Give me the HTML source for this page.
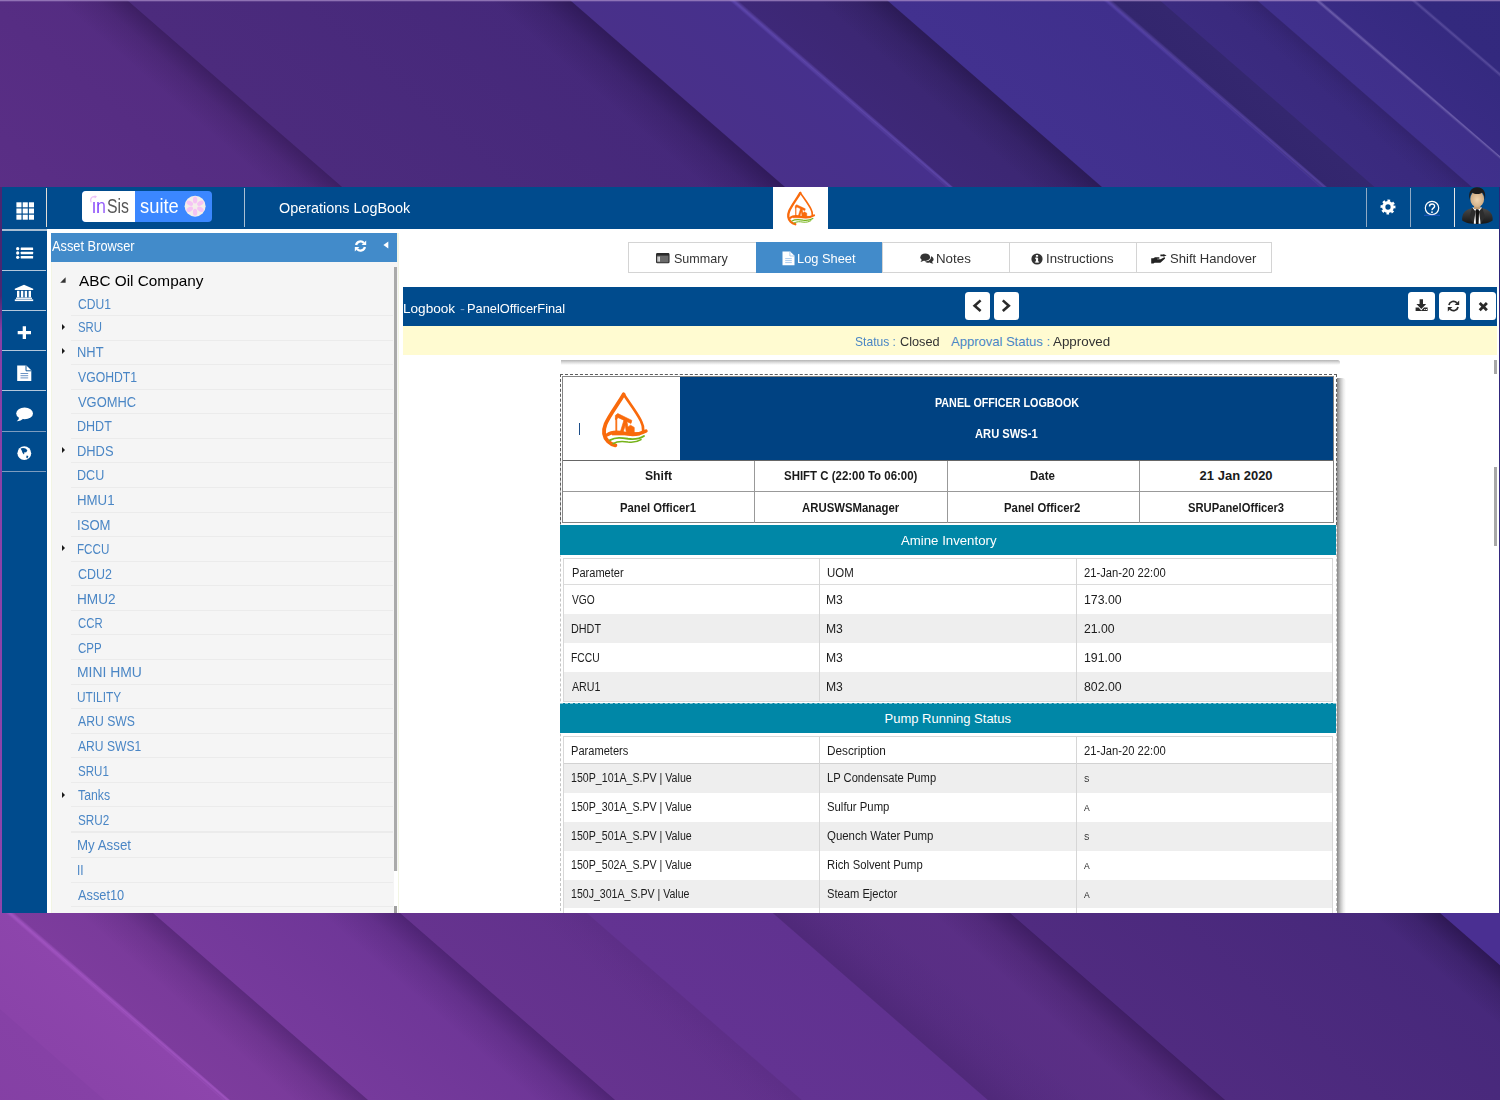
<!DOCTYPE html>
<html lang="en"><head><meta charset="utf-8"><title>Operations LogBook</title>
<style>
html,body{margin:0;padding:0;}
body{width:1500px;height:1100px;overflow:hidden;position:relative;background:#4b2a7c;font-family:"Liberation Sans",sans-serif;}
#bg{position:absolute;left:0;top:0;width:1500px;height:1100px;}
#app{position:absolute;left:0;top:0;width:1500px;height:912.6px;overflow:hidden;}
#app div,#app svg,#app span{position:absolute;}
#texts{position:absolute;left:0;top:0;width:1500px;height:912.6px;overflow:hidden;}
#texts .t{position:absolute;white-space:pre;transform-origin:0 50%;display:block;}
.hb{background:#004b8d;}
.sep{height:1px;left:2px;width:44px;background:#b4c8dc;}
.vd{width:1px;top:188px;height:39px;}
.btn{background:#fff;border-radius:3.5px;top:292px;height:28px;}
.trow{left:71px;width:322px;height:1px;background:#ebebeb;}
.tri{width:0;height:0;border-left:3.7px solid #1a1a1a;border-top:3.8px solid transparent;border-bottom:3.8px solid transparent;left:61.9px;}
.tab{top:242px;height:29px;border:1px solid #d4d4d4;background:#fff;box-sizing:content-box;}
.teal{background:#0086a6;left:560px;width:775px;height:30px;}
.g{background:#eee;left:564px;width:768px;}
svg{display:block;overflow:visible;}

</style></head>
<body>
<svg id="bg" viewBox="0 0 1500 1100" preserveAspectRatio="none">
<defs>
<linearGradient id="gt" x1="0" y1="0" x2="1" y2="0"><stop offset="0" stop-color="#5a2d84"/><stop offset="0.45" stop-color="#46297b"/><stop offset="1" stop-color="#34277c"/></linearGradient>
<linearGradient id="gb" x1="0" y1="0" x2="1" y2="0"><stop offset="0" stop-color="#8a40a8"/><stop offset="0.5" stop-color="#5d3088"/><stop offset="1" stop-color="#44287a"/></linearGradient>
</defs>
<rect x="0" y="0" width="1500" height="560" fill="url(#gt)"/>
<rect x="0" y="560" width="1500" height="540" fill="url(#gb)"/>
<defs><linearGradient id="g1" gradientUnits="userSpaceOnUse" x1="-300.0" y1="0.0" x2="-116.1" y2="-211.4"><stop offset="0" stop-color="#5c2f87"/><stop offset="1" stop-color="#532c81"/></linearGradient><linearGradient id="g2" gradientUnits="userSpaceOnUse" x1="127.0" y1="0.0" x2="317.7" y2="-219.4"><stop offset="0" stop-color="#4c2b7d"/><stop offset="1" stop-color="#44287a"/></linearGradient><linearGradient id="g3" gradientUnits="userSpaceOnUse" x1="570.0" y1="0.0" x2="640.2" y2="-80.7"><stop offset="0" stop-color="#49308a"/><stop offset="1" stop-color="#46308c"/></linearGradient><linearGradient id="g4" gradientUnits="userSpaceOnUse" x1="733.0" y1="0.0" x2="799.3" y2="-76.3"><stop offset="0" stop-color="#3e2878"/><stop offset="1" stop-color="#3a2670"/></linearGradient><linearGradient id="g5" gradientUnits="userSpaceOnUse" x1="887.0" y1="0.0" x2="981.7" y2="-108.9"><stop offset="0" stop-color="#42318f"/><stop offset="1" stop-color="#3f2f8c"/></linearGradient><linearGradient id="g6" gradientUnits="userSpaceOnUse" x1="1107.0" y1="0.0" x2="1129.8" y2="-26.2"><stop offset="0" stop-color="#33266e"/><stop offset="1" stop-color="#34276f"/></linearGradient><linearGradient id="g7" gradientUnits="userSpaceOnUse" x1="1160.0" y1="0.0" x2="1201.8" y2="-48.0"><stop offset="0" stop-color="#3b2b80"/><stop offset="1" stop-color="#39297c"/></linearGradient><linearGradient id="g8" gradientUnits="userSpaceOnUse" x1="1257.0" y1="0.0" x2="1282.8" y2="-29.7"><stop offset="0" stop-color="#40308c"/><stop offset="1" stop-color="#3f2f8a"/></linearGradient><linearGradient id="g9" gradientUnits="userSpaceOnUse" x1="1317.0" y1="0.0" x2="1358.3" y2="-47.5"><stop offset="0" stop-color="#392b84"/><stop offset="1" stop-color="#352a80"/></linearGradient><linearGradient id="g10" gradientUnits="userSpaceOnUse" x1="1413.0" y1="0.0" x2="1536.6" y2="-142.1"><stop offset="0" stop-color="#33297e"/><stop offset="1" stop-color="#32287c"/></linearGradient><linearGradient id="g11" gradientUnits="userSpaceOnUse" x1="57.0" y1="0.0" x2="87.1" y2="-34.7"><stop offset="0" stop-color="#1e0d3a" stop-opacity="0"/><stop offset="0.55" stop-color="#1e0d3a" stop-opacity="0.147"/><stop offset="1" stop-color="#1e0d3a" stop-opacity="0.42"/></linearGradient><linearGradient id="g12" gradientUnits="userSpaceOnUse" x1="490.0" y1="0.0" x2="524.4" y2="-39.6"><stop offset="0" stop-color="#180a34" stop-opacity="0"/><stop offset="0.55" stop-color="#180a34" stop-opacity="0.1575"/><stop offset="1" stop-color="#180a34" stop-opacity="0.45"/></linearGradient><linearGradient id="g13" gradientUnits="userSpaceOnUse" x1="817.0" y1="0.0" x2="847.1" y2="-34.7"><stop offset="0" stop-color="#150a30" stop-opacity="0"/><stop offset="0.55" stop-color="#150a30" stop-opacity="0.13999999999999999"/><stop offset="1" stop-color="#150a30" stop-opacity="0.4"/></linearGradient><linearGradient id="g14" gradientUnits="userSpaceOnUse" x1="1217.0" y1="0.0" x2="1234.2" y2="-19.8"><stop offset="0" stop-color="#150a30" stop-opacity="0"/><stop offset="0.55" stop-color="#150a30" stop-opacity="0.063"/><stop offset="1" stop-color="#150a30" stop-opacity="0.18"/></linearGradient><linearGradient id="g15" gradientUnits="userSpaceOnUse" x1="728.0" y1="0.0" x2="732.3" y2="-5.0"><stop offset="0" stop-color="#7a62d8" stop-opacity="0"/><stop offset="0.5" stop-color="#7a62d8" stop-opacity="0.5"/><stop offset="1" stop-color="#7a62d8" stop-opacity="0"/></linearGradient><linearGradient id="g16" gradientUnits="userSpaceOnUse" x1="1102.0" y1="0.0" x2="1106.3" y2="-5.0"><stop offset="0" stop-color="#7a62d8" stop-opacity="0"/><stop offset="0.5" stop-color="#7a62d8" stop-opacity="0.45"/><stop offset="1" stop-color="#7a62d8" stop-opacity="0"/></linearGradient><linearGradient id="g17" gradientUnits="userSpaceOnUse" x1="1313.5" y1="0.0" x2="1316.5" y2="-3.5"><stop offset="0" stop-color="#b0a0e0" stop-opacity="0"/><stop offset="0.5" stop-color="#b0a0e0" stop-opacity="0.42"/><stop offset="1" stop-color="#b0a0e0" stop-opacity="0"/></linearGradient><linearGradient id="g18" gradientUnits="userSpaceOnUse" x1="1409.5" y1="0.0" x2="1412.5" y2="-3.5"><stop offset="0" stop-color="#a090d8" stop-opacity="0"/><stop offset="0.5" stop-color="#a090d8" stop-opacity="0.32"/><stop offset="1" stop-color="#a090d8" stop-opacity="0"/></linearGradient><linearGradient id="g19" gradientUnits="userSpaceOnUse" x1="-409.2" y1="905.0" x2="-284.3" y2="761.4"><stop offset="0" stop-color="#823ea2"/><stop offset="1" stop-color="#8641a6"/></linearGradient><linearGradient id="g20" gradientUnits="userSpaceOnUse" x1="-119.2" y1="905.0" x2="-67.5" y2="845.6"><stop offset="0" stop-color="#8a43a9"/><stop offset="1" stop-color="#8d45ac"/></linearGradient><linearGradient id="g21" gradientUnits="userSpaceOnUse" x1="0.8" y1="905.0" x2="62.4" y2="834.2"><stop offset="0" stop-color="#7d3c9d"/><stop offset="1" stop-color="#773999"/></linearGradient><linearGradient id="g22" gradientUnits="userSpaceOnUse" x1="143.8" y1="905.0" x2="250.2" y2="782.7"><stop offset="0" stop-color="#763a9c"/><stop offset="1" stop-color="#6c3596"/></linearGradient><linearGradient id="g23" gradientUnits="userSpaceOnUse" x1="390.8" y1="905.0" x2="471.3" y2="812.4"><stop offset="0" stop-color="#66338f"/><stop offset="1" stop-color="#61318c"/></linearGradient><linearGradient id="g24" gradientUnits="userSpaceOnUse" x1="577.8" y1="905.0" x2="657.9" y2="812.9"><stop offset="0" stop-color="#633392"/><stop offset="1" stop-color="#603290"/></linearGradient><linearGradient id="g25" gradientUnits="userSpaceOnUse" x1="763.8" y1="905.0" x2="865.8" y2="787.6"><stop offset="0" stop-color="#582e84"/><stop offset="1" stop-color="#5b2f86"/></linearGradient><linearGradient id="g26" gradientUnits="userSpaceOnUse" x1="1000.8" y1="905.0" x2="1185.9" y2="692.1"><stop offset="0" stop-color="#502b80"/><stop offset="1" stop-color="#45287a"/></linearGradient><linearGradient id="g27" gradientUnits="userSpaceOnUse" x1="-4.2" y1="905.0" x2="0.1" y2="900.0"><stop offset="0" stop-color="#b562d6" stop-opacity="0"/><stop offset="0.5" stop-color="#b562d6" stop-opacity="0.6"/><stop offset="1" stop-color="#b562d6" stop-opacity="0"/></linearGradient><linearGradient id="g28" gradientUnits="userSpaceOnUse" x1="68.8" y1="905.0" x2="101.1" y2="867.9"><stop offset="0" stop-color="#2a0f4a" stop-opacity="0"/><stop offset="0.55" stop-color="#2a0f4a" stop-opacity="0.1295"/><stop offset="1" stop-color="#2a0f4a" stop-opacity="0.37"/></linearGradient><linearGradient id="g29" gradientUnits="userSpaceOnUse" x1="310.8" y1="905.0" x2="345.2" y2="865.4"><stop offset="0" stop-color="#260d46" stop-opacity="0"/><stop offset="0.55" stop-color="#260d46" stop-opacity="0.147"/><stop offset="1" stop-color="#260d46" stop-opacity="0.42"/></linearGradient><linearGradient id="g30" gradientUnits="userSpaceOnUse" x1="517.8" y1="905.0" x2="543.6" y2="875.3"><stop offset="0" stop-color="#260d46" stop-opacity="0"/><stop offset="0.55" stop-color="#260d46" stop-opacity="0.0245"/><stop offset="1" stop-color="#260d46" stop-opacity="0.07"/></linearGradient><linearGradient id="g31" gradientUnits="userSpaceOnUse" x1="763.8" y1="905.0" x2="806.9" y2="855.5"><stop offset="0" stop-color="#220c42" stop-opacity="0.16"/><stop offset="0.45" stop-color="#220c42" stop-opacity="0.055999999999999994"/><stop offset="1" stop-color="#220c42" stop-opacity="0"/></linearGradient><linearGradient id="g32" gradientUnits="userSpaceOnUse" x1="920.8" y1="905.0" x2="955.2" y2="865.4"><stop offset="0" stop-color="#1e0a3c" stop-opacity="0"/><stop offset="0.55" stop-color="#1e0a3c" stop-opacity="0.1575"/><stop offset="1" stop-color="#1e0a3c" stop-opacity="0.45"/></linearGradient><linearGradient id="g33" gradientUnits="userSpaceOnUse" x1="1360.8" y1="905.0" x2="1390.9" y2="870.3"><stop offset="0" stop-color="#170830" stop-opacity="0"/><stop offset="0.55" stop-color="#170830" stop-opacity="0.175"/><stop offset="1" stop-color="#170830" stop-opacity="0.5"/></linearGradient></defs>
<polygon points="-300.5,0.0 127.5,0.0 346.0,190.0 -82.0,190.0" fill="url(#g1)"/>
<polygon points="126.5,0.0 570.5,0.0 789.0,190.0 345.0,190.0" fill="url(#g2)"/>
<polygon points="569.5,0.0 733.5,0.0 952.0,190.0 788.0,190.0" fill="url(#g3)"/>
<polygon points="732.5,0.0 887.5,0.0 1106.0,190.0 951.0,190.0" fill="url(#g4)"/>
<polygon points="886.5,0.0 1107.5,0.0 1326.0,190.0 1105.0,190.0" fill="url(#g5)"/>
<polygon points="1106.5,0.0 1160.5,0.0 1379.0,190.0 1325.0,190.0" fill="url(#g6)"/>
<polygon points="1159.5,0.0 1257.5,0.0 1476.0,190.0 1378.0,190.0" fill="url(#g7)"/>
<polygon points="1256.5,0.0 1317.5,0.0 1536.0,190.0 1475.0,190.0" fill="url(#g8)"/>
<polygon points="1316.5,0.0 1413.5,0.0 1632.0,190.0 1535.0,190.0" fill="url(#g9)"/>
<polygon points="1412.5,0.0 1700.5,0.0 1919.0,190.0 1631.0,190.0" fill="url(#g10)"/>
<polygon points="57.0,0.0 127.0,0.0 345.5,190.0 275.5,190.0" fill="url(#g11)"/>
<polygon points="490.0,0.0 570.0,0.0 788.5,190.0 708.5,190.0" fill="url(#g12)"/>
<polygon points="817.0,0.0 887.0,0.0 1105.5,190.0 1035.5,190.0" fill="url(#g13)"/>
<polygon points="1217.0,0.0 1257.0,0.0 1475.5,190.0 1435.5,190.0" fill="url(#g14)"/>
<polygon points="728.0,0.0 738.0,0.0 956.5,190.0 946.5,190.0" fill="url(#g15)"/>
<polygon points="1102.0,0.0 1112.0,0.0 1330.5,190.0 1320.5,190.0" fill="url(#g16)"/>
<polygon points="1313.5,0.0 1320.5,0.0 1539.0,190.0 1532.0,190.0" fill="url(#g17)"/>
<polygon points="1409.5,0.0 1416.5,0.0 1635.0,190.0 1628.0,190.0" fill="url(#g18)"/>
<rect x="0" y="0" width="1500" height="1.3" fill="#a58ac6" opacity="0.75"/>
<polygon points="-409.7,905.0 -118.7,905.0 105.5,1100.0 -185.5,1100.0" fill="url(#g19)"/>
<polygon points="-119.7,905.0 1.3,905.0 225.5,1100.0 104.5,1100.0" fill="url(#g20)"/>
<polygon points="0.3,905.0 144.3,905.0 368.5,1100.0 224.5,1100.0" fill="url(#g21)"/>
<polygon points="143.3,905.0 391.3,905.0 615.5,1100.0 367.5,1100.0" fill="url(#g22)"/>
<polygon points="390.3,905.0 578.3,905.0 802.5,1100.0 614.5,1100.0" fill="url(#g23)"/>
<polygon points="577.3,905.0 764.3,905.0 988.5,1100.0 801.5,1100.0" fill="url(#g24)"/>
<polygon points="763.3,905.0 1001.3,905.0 1225.5,1100.0 987.5,1100.0" fill="url(#g25)"/>
<polygon points="1000.3,905.0 1431.3,905.0 1655.5,1100.0 1224.5,1100.0" fill="url(#g26)"/>
<polygon points="1430.8,905.0 1790.8,905.0 2015.0,1100.0 1655.0,1100.0" fill="#4a2f92"/>
<polygon points="-4.2,905.0 5.8,905.0 230.0,1100.0 220.0,1100.0" fill="url(#g27)"/>
<polygon points="68.8,905.0 143.8,905.0 368.0,1100.0 293.0,1100.0" fill="url(#g28)"/>
<polygon points="310.8,905.0 390.8,905.0 615.0,1100.0 535.0,1100.0" fill="url(#g29)"/>
<polygon points="517.8,905.0 577.8,905.0 802.0,1100.0 742.0,1100.0" fill="url(#g30)"/>
<polygon points="763.8,905.0 863.8,905.0 1088.0,1100.0 988.0,1100.0" fill="url(#g31)"/>
<polygon points="920.8,905.0 1000.8,905.0 1225.0,1100.0 1145.0,1100.0" fill="url(#g32)"/>
<polygon points="1360.8,905.0 1430.8,905.0 1655.0,1100.0 1585.0,1100.0" fill="url(#g33)"/>
<linearGradient id="gl" x1="0" y1="0" x2="0" y2="1"><stop offset="0" stop-color="#4a2672"/><stop offset="0.15" stop-color="#4a2672"/><stop offset="0.2" stop-color="#8a3fa6"/><stop offset="1" stop-color="#8e44ac"/></linearGradient>
<rect x="0" y="187" width="2" height="726" fill="url(#gl)"/>
<linearGradient id="gr" x1="0" y1="0" x2="0" y2="1"><stop offset="0" stop-color="#2c2478"/><stop offset="1" stop-color="#3a2a86"/></linearGradient>
<rect x="1499" y="187" width="1" height="726" fill="url(#gr)"/>
</svg>
<div id="app">
  <div style="left:2px;top:187px;width:1497px;height:725.6px;background:#fff;"></div>
  <!-- header -->
  <div class="hb" style="left:2px;top:187px;width:1497px;height:42px;"></div>
  <div class="hb" style="left:2px;top:229px;width:45px;height:684px;"></div>
  <div style="left:2px;top:229px;width:45px;height:1.5px;background:#a9bfd4;"></div>
  <div class="sep" style="top:270px;"></div>
  <div class="sep" style="top:310px;"></div>
  <div class="sep" style="top:350px;"></div>
  <div class="sep" style="top:390px;"></div>
  <div class="sep" style="top:431px;background:#7d9cbf;"></div>
  <div class="sep" style="top:470.5px;background:#7d9cbf;"></div>
  <div class="vd" style="left:46px;background:#e2ddd6;"></div>
  <div class="vd" style="left:244px;background:#a9bfd4;"></div>
  <div class="vd" style="left:1365.5px;background:#8fa9c4;"></div>
  <div class="vd" style="left:1409.5px;background:#8fa9c4;"></div>
  <div class="vd" style="left:1453.5px;background:#e6e6e6;"></div>
  <!-- asset browser -->
  <div style="left:51px;top:232.5px;width:348px;height:681px;background:#f2f5e4;"></div>
  <div style="left:52px;top:262px;width:346.2px;height:651px;background:#f5f5f5;"></div>
  <div style="left:51px;top:232.6px;width:346px;height:29.2px;background:#428bca;"></div>
  <div style="left:394px;top:871px;width:4.2px;height:42px;background:#fff;"></div>
  <div style="left:394.1px;top:267px;width:2.9px;height:604px;background:#aaa;"></div>
  <div style="left:394.1px;top:906px;width:2.9px;height:8px;background:#a0a0a0;"></div>
  <div class="trow" style="top:314.9px;"></div>
<div class="trow" style="top:339.5px;"></div>
<div class="trow" style="top:364.0px;"></div>
<div class="trow" style="top:388.6px;"></div>
<div class="trow" style="top:413.2px;"></div>
<div class="trow" style="top:437.8px;"></div>
<div class="trow" style="top:462.3px;"></div>
<div class="trow" style="top:486.9px;"></div>
<div class="trow" style="top:511.5px;"></div>
<div class="trow" style="top:536.0px;"></div>
<div class="trow" style="top:560.6px;"></div>
<div class="trow" style="top:585.2px;"></div>
<div class="trow" style="top:609.7px;"></div>
<div class="trow" style="top:634.3px;"></div>
<div class="trow" style="top:658.9px;"></div>
<div class="trow" style="top:683.5px;"></div>
<div class="trow" style="top:708.0px;"></div>
<div class="trow" style="top:732.6px;"></div>
<div class="trow" style="top:757.2px;"></div>
<div class="trow" style="top:781.7px;"></div>
<div class="trow" style="top:806.3px;"></div>
<div class="trow" style="top:830.9px;height:2px;"></div>
<div class="trow" style="top:857.0px;"></div>
<div class="trow" style="top:881.7px;"></div>
<div class="trow" style="top:906.1px;"></div>
<div class="tri" style="top:323.5px;"></div>
<div class="tri" style="top:348.4px;"></div>
<div class="tri" style="top:446.7px;"></div>
<div class="tri" style="top:545.2px;"></div>
<div class="tri" style="top:791.5px;"></div>
<svg style="left:60px;top:276.5px;" width="6" height="6" viewBox="0 0 6 6"><path d="M5.6 0.3 L5.6 5.8 L0.2 5.8 Z" fill="#333"/></svg>
  <!-- tabs -->
  <div class="tab" style="left:628px;width:127px;"></div>
  <div class="tab" style="left:756px;width:125px;background:#428bca;border-color:#428bca;"></div>
  <div class="tab" style="left:882px;width:126.5px;"></div>
  <div class="tab" style="left:1009px;width:126.5px;"></div>
  <div class="tab" style="left:1136px;width:133.5px;"></div>
  <!-- logbook bar -->
  <div class="hb" style="left:402.5px;top:287px;width:1094.5px;height:39.3px;"></div>
  <div style="left:402.5px;top:326.3px;width:1094.5px;height:28.9px;background:#fffbd1;"></div>
  <div class="btn" style="left:965px;width:24.5px;"></div>
  <div class="btn" style="left:994px;width:24.5px;"></div>
  <div class="btn" style="left:1408px;width:27px;"></div>
  <div class="btn" style="left:1439px;width:27px;"></div>
  <div class="btn" style="left:1470px;width:26px;"></div>
  <!-- right scrollbar -->
  <div style="left:1494px;top:360px;width:3px;height:13.5px;background:#a8a8a8;"></div>
  <div style="left:1494px;top:467px;width:3px;height:79px;background:#a8a8a8;"></div>
  <!-- grid icon -->
<svg style="left:16px;top:202px;" width="18" height="18" viewBox="0 0 18 18"><g fill="#fff"><rect x="0.4" y="0.3" width="5.1" height="5"/><rect x="6.7" y="0.3" width="5.1" height="5"/><rect x="12.9" y="0.3" width="5.1" height="5"/><rect x="0.4" y="6.5" width="5.1" height="5"/><rect x="6.7" y="6.5" width="5.1" height="5"/><rect x="12.9" y="6.5" width="5.1" height="5"/><rect x="0.4" y="12.7" width="5.1" height="5"/><rect x="6.7" y="12.7" width="5.1" height="5"/><rect x="12.9" y="12.7" width="5.1" height="5"/></g></svg>
<!-- inSis suite logo -->
<div style="left:82px;top:191px;width:130px;height:31px;border-radius:4px;background:#3b87ff;overflow:hidden;"><div style="left:0;top:0;width:53px;height:31px;background:#fff;"></div></div>
<svg style="left:82px;top:191px;" width="130" height="31" viewBox="0 0 130 31">
<path d="M9 10.8 C7.8 8.2 9.4 5.8 12 5.7 L13.6 5.9" fill="none" stroke="#ecc2f8" stroke-width="1.3" stroke-linecap="round"/><path d="M12.6 4.2 L15 5.6 L12.800 7.400 Z" fill="#ecc2f8"/>
<circle cx="113.1" cy="15.2" r="10.5" fill="#f4eeea"/>
<g fill="#f5c4f4"><ellipse cx="113.10" cy="9.10" rx="2.2" ry="3.5" transform="rotate(0 113.10 9.10)"/><ellipse cx="118.38" cy="12.15" rx="2.2" ry="3.5" transform="rotate(60 118.38 12.15)"/><ellipse cx="118.38" cy="18.25" rx="2.2" ry="3.5" transform="rotate(120 118.38 18.25)"/><ellipse cx="113.10" cy="21.30" rx="2.2" ry="3.5" transform="rotate(180 113.10 21.30)"/><ellipse cx="107.82" cy="18.25" rx="2.2" ry="3.5" transform="rotate(240 107.82 18.25)"/><ellipse cx="107.82" cy="12.15" rx="2.2" ry="3.5" transform="rotate(300 107.82 12.15)"/></g>
</svg>
<!-- center company logo -->
<div style="left:773px;top:187px;width:55px;height:42px;background:#fff;"></div>
<svg style="left:786.8px;top:192.4px;" width="27.7" height="33.2" viewBox="0 0 45 54">
<g fill="none" stroke-linecap="round" stroke-linejoin="round">
<path d="M21.6 1.4 C17.5 9 7.4 22 3.6 31 C1 37.500 1.600 44 6 48.400 C8 50.400 10.500 51.700 13.400 52.400" stroke="#f96a0c" stroke-width="3.800"/>
<path d="M21.500 1 C25.500 7.500 35 19.500 39 28 C40.800 31.600 41.400 34.500 41.200 37.800" stroke="#f96a0c" stroke-width="2.700"/>
<path d="M5 42 C10 38.200 16 38.600 22 40.200 C29 42.200 37 41.700 44 38" stroke="#f96a0c" stroke-width="3.400"/>
<path d="M8 47.200 C14 43.800 20 44.800 26 45.800 C32 46.600 38 45.600 42 43" stroke="#76b31a" stroke-width="1.900"/>
<path d="M11 50.600 C16 47.600 21 48.200 26 49 C31 49.600 35.500 48.800 39 46.600" stroke="#76b31a" stroke-width="1.600"/>
</g>
<g fill="#f96a0c" stroke="#f96a0c" stroke-width="0.700" stroke-linejoin="round">
<path d="M18 40 L22 27 L24.600 27 L27 40 L24.400 40 L23.300 32 L20.800 40 Z"/>
<path d="M13.400 22.400 L15.800 20.600 L29.800 27.400 L29 30.400 L15.800 24.400 C15.600 25.400 14.800 26.200 13.400 26.600 Z"/>
<rect x="13.800" y="25" width="1" height="14.500"/>
<path d="M25.600 40 L25.600 34.400 L28.400 32.200 L32.200 34.400 L32.200 40 Z"/>
<path d="M10 39.600 L38 39.600 L38 42 L10 42 Z"/>
</g>

</svg>
<!-- gear -->
<svg style="left:1379px;top:198px;" width="18" height="18" viewBox="-9 -9 18 18"><circle r="4.3" fill="none" stroke="#fff" stroke-width="3.3"/><circle r="6.3" fill="none" stroke="#fff" stroke-width="2.4" stroke-dasharray="2.474 2.474" transform="rotate(-11.25)"/></svg>
<!-- help -->
<svg style="left:1423px;top:198.8px;" width="18" height="18" viewBox="-9 -9 18 18"><circle r="6.7" fill="none" stroke="#fff" stroke-width="1.2"/><path d="M-2.5 -1.6 C-2.5 -4.8 2.6 -4.8 2.6 -1.8 C2.6 0 0 0.2 0 2.2" fill="none" stroke="#fff" stroke-width="1.4"/><circle cx="0" cy="4.2" r="0.9" fill="#fff"/><path d="M-8 7.3 L8 7.3" stroke="#2f5fd0" stroke-width="0.8"/></svg>
<!-- avatar -->
<svg style="left:1460px;top:187px;" width="36" height="40" viewBox="0 0 36 40">
<defs><radialGradient id="face" cx="0.5" cy="0.55" r="0.6"><stop offset="0" stop-color="#f0d5b0"/><stop offset="1" stop-color="#c9a47a"/></radialGradient>
<linearGradient id="suit" x1="0" y1="0" x2="0" y2="1"><stop offset="0" stop-color="#4a4a4a"/><stop offset="1" stop-color="#151515"/></linearGradient></defs>
<path d="M2.2 33.5 C1.6 27 4.5 23.2 11.5 21.2 L23 21.2 C30 23.2 33.2 27 32.6 33.5 C27 38.3 8 38.3 2.2 33.5 Z" fill="url(#suit)"/>
<path d="M12.3 20.6 L22 20.6 L20.6 36.7 L13.8 36.7 Z" fill="#fafafa"/>
<path d="M16 22.2 L18.4 22.2 L19.1 24 L18.6 36.9 L15.9 36.9 L15.4 24 Z" fill="#111"/>
<path d="M12.2 20.4 L15.6 24.6 L13.6 36.7 L9.5 30 Z" fill="#2d2d2d"/><path d="M22.2 20.4 L18.9 24.6 L20.8 36.7 L25 30 Z" fill="#2d2d2d"/>
<rect x="14" y="17" width="6.4" height="5" fill="#c39e74"/>
<ellipse cx="17.2" cy="12" rx="6.9" ry="8.2" fill="url(#face)"/>
<path d="M9.6 13 C8 5 11 0.2 17.2 0.2 C23.6 0.2 26.4 5 24.8 13 C24.6 9 23.6 6.6 22 5.6 C20 7.6 14.4 7.6 12.4 5.6 C10.8 6.6 9.8 9 9.6 13 Z" fill="#1c1c1c"/>
</svg>
<!-- rail icons -->
<svg style="left:15px;top:245px;" width="20" height="17" viewBox="15 245 20 17"><g fill="#fff"><circle cx="17.7" cy="248.7" r="1.65"/><circle cx="17.7" cy="253" r="1.65"/><circle cx="17.7" cy="257.3" r="1.65"/><rect x="20.7" y="247.5" width="12.4" height="2.4" rx="0.5"/><rect x="20.7" y="251.8" width="12.4" height="2.4" rx="0.5"/><rect x="20.7" y="256.1" width="12.4" height="2.4" rx="0.5"/></g></svg>
<svg style="left:14px;top:284px;" width="20" height="18" viewBox="14 284 20 18"><g fill="#fff"><path d="M24 284.8 L33.2 288.8 L33.2 290 L14.8 290 L14.8 288.8 Z"/><rect x="17" y="290.8" width="2.4" height="6.6"/><rect x="20.9" y="290.8" width="2.4" height="6.6"/><rect x="24.7" y="290.8" width="2.4" height="6.6"/><rect x="28.6" y="290.8" width="2.4" height="6.6"/><rect x="16" y="297.6" width="16" height="1.3"/><rect x="14.8" y="299.4" width="18.4" height="1.7"/></g></svg>
<svg style="left:17px;top:326px;" width="15" height="14" viewBox="17 326 15 14"><path d="M22.7 326.3 H26 V331 H31 V334.3 H26 V339.1 H22.7 V334.3 H17.7 V331 H22.7 Z" fill="#fff"/></svg>
<svg style="left:16px;top:365px;" width="16" height="17" viewBox="16 365 16 17"><path d="M17.2 365.4 H26.4 L31.3 370.3 V381 H17.2 Z" fill="#fff"/><path d="M26 365.4 V370.8 H31.3" fill="none" stroke="#004b8d" stroke-width="0.9"/><g stroke="#6a93c4" stroke-width="1"><path d="M20.5 373.5 H28.2 M20.5 375.7 H28.2 M20.5 377.9 H28.2"/></g></svg>
<svg style="left:15px;top:407px;" width="19" height="15" viewBox="15 407 19 15"><ellipse cx="24.6" cy="413.4" rx="8.4" ry="5.8" fill="#fff"/><path d="M19 417.2 C19 419 18 420.4 16.6 421.2 C19.5 421.2 22 420 23.4 418.4 Z" fill="#fff"/></svg>
<svg style="left:17px;top:446px;" width="15" height="15" viewBox="17 446 15 15"><circle cx="24.3" cy="453.2" r="6.9" fill="#fff"/><path d="M20.6 448.6 C22.5 447.6 24.5 448 26 448.8 L27.4 450.6 L26 452.4 L24.6 452 L24 454.4 L22.6 453 L21.8 450.8 Z" fill="#004b8d"/><path d="M26.6 455.4 L28.4 456 L27.4 458.4 L26.2 457.6 Z" fill="#004b8d"/></svg>
<!-- asset header icons -->
<svg style="left:354px;top:239.5px;" width="13" height="12" viewBox="-6.5 -6 13 12"><g fill="none" stroke="#fff" stroke-width="2.3"><path d="M-4.4 -1 A4.5 4.5 0 0 1 3.4 -3"/><path d="M4.4 1 A4.5 4.5 0 0 1 -3.4 3"/></g><path d="M5.7 -5.6 V-1 H1.1 Z" fill="#fff"/><path d="M-5.7 5.6 V1 H-1.1 Z" fill="#fff"/></svg>
<svg style="left:382.6px;top:241.2px;" width="6" height="8" viewBox="0 0 6 8"><path d="M5.3 0.4 V7.6 L0.4 4 Z" fill="#fff"/></svg>
<!-- tab icons -->
<svg style="left:655.6px;top:252.6px;" width="13.6" height="10.4" viewBox="0 0 13.6 10.4"><rect x="0.6" y="0.6" width="12.4" height="9.2" rx="0.9" fill="#6a6a6a" stroke="#2b2b2b" stroke-width="1.1"/><rect x="0.6" y="0.6" width="12.4" height="2" fill="#2b2b2b"/><rect x="2.3" y="3.6" width="1.5" height="5" fill="#f4f4f4"/><rect x="1.2" y="3.6" width="0.8" height="5" fill="#bbb"/></svg>
<svg style="left:781.5px;top:251.4px;" width="13" height="15" viewBox="0 0 13 15"><path d="M0.5 0.4 H8.2 L12.5 4.7 V14.3 H0.5 Z" fill="#fff"/><path d="M7.9 0.4 V5 H12.5" fill="none" stroke="#9bc0e6" stroke-width="0.8"/><path d="M3.2 7.6 H9.8 M3.2 9.6 H9.8 M3.2 11.6 H9.8" stroke="#a9cbee" stroke-width="1"/></svg>
<svg style="left:919.5px;top:252.5px;" width="14" height="11" viewBox="0 0 14 11"><ellipse cx="5.2" cy="4.2" rx="4.9" ry="3.7" fill="#333"/><path d="M1.6 6.4 C1.6 7.6 1 8.4 0.2 8.8 C2 8.8 3.4 8 4.2 7 Z" fill="#333"/><path d="M11 3.2 C12.6 3.9 13.6 5 13.6 6.3 C13.6 7.3 13 8.2 12 8.8 C12.2 9.6 12.8 10.2 13.4 10.6 C11.8 10.6 10.6 10.2 9.8 9.6 C7.8 9.9 5.8 9.4 4.8 8.4 C8.4 8.6 11.4 6.6 11 3.2 Z" fill="#333"/></svg>
<svg style="left:1031.3px;top:252.8px;" width="12" height="12" viewBox="-6 -6 12 12"><circle r="5.6" fill="#333"/><rect x="-1.1" y="-1.3" width="2.2" height="4.6" fill="#fff"/><rect x="-2" y="-1.3" width="2" height="1" fill="#fff"/><rect x="-2.1" y="2.5" width="4.2" height="1" fill="#fff"/><rect x="-1.1" y="-4" width="2.2" height="1.7" fill="#fff"/></svg>
<svg style="left:1150.5px;top:253.6px;" width="16" height="10" viewBox="0 0 16 10"><path d="M0.2 4.2 H2.4 L4 3.2 H7.8 C8.8 3.2 8.8 4.8 7.8 4.8 H6.2 V5.3 H9.6 L12.8 3.4 C13.8 2.9 14.6 4 13.8 4.7 L10 8.2 C9.6 8.6 9.2 8.7 8.6 8.7 H3.6 L2.4 9.4 H0.2 Z" fill="#222"/><path d="M9.4 0.6 H12.4 V0 L15.6 1.4 L12.4 2.8 V2.2 H9.4 Z" fill="#222"/></svg>
<!-- nav chevrons -->
<svg style="left:965px;top:292px;" width="25" height="28" viewBox="965 292 25 28"><path d="M980.6 300.4 L974.6 305.7 L980.6 311" fill="none" stroke="#2a2a2a" stroke-width="2.6"/></svg>
<svg style="left:994px;top:292px;" width="25" height="28" viewBox="994 292 25 28"><path d="M1002.8 300.4 L1008.8 305.7 L1002.8 311" fill="none" stroke="#2a2a2a" stroke-width="2.6"/></svg>
<!-- right buttons icons -->
<svg style="left:1408px;top:292px;" width="27" height="28" viewBox="1408 292 27 28"><g fill="#2a2a2a"><path d="M1419.6 299.2 H1423 V304 H1426.2 L1421.3 309 L1416.4 304 H1419.6 Z"/><path d="M1415.6 307.6 H1418.6 L1421.3 310.4 L1424 307.6 H1427.6 V311 H1415.6 Z"/></g><rect x="1424.200" y="309" width="1.1" height="1" fill="#fff"/><rect x="1425.9" y="309" width="1.1" height="1" fill="#fff"/></svg>
<svg style="left:1446.800px;top:299.500px;" width="13" height="12" viewBox="-6.500 -6 13 12"><g fill="none" stroke="#2a2a2a" stroke-width="1.7"><path d="M-4.600 -1 A4.700 4.700 0 0 1 3.400 -3.200"/><path d="M4.600 1 A4.700 4.700 0 0 1 -3.400 3.200"/></g><path d="M5.700 -5.600 V-1 H1.100 Z" fill="#2a2a2a"/><path d="M-5.700 5.600 V1 H-1.100 Z" fill="#2a2a2a"/></svg>
<svg style="left:1470px;top:292px;" width="27" height="28" viewBox="1470 292 27 28"><path d="M1479.700 303.100 L1486.900 310.300 M1486.900 303.100 L1479.700 310.300" stroke="#2a2a2a" stroke-width="2.800"/></svg>

<div style="left:561px;top:359.6px;width:779px;height:5px;background:linear-gradient(#b4b4b4,#dadada 45%,rgba(255,255,255,0));border-radius:0 3px 3px 0;"></div>
<div style="left:1336px;top:377.5px;width:10px;height:560px;background:linear-gradient(90deg,#767676,#9c9c9c 22%,#c9c9c9 48%,#ececec 75%,rgba(255,255,255,0));border-radius:0 4px 0 0;"></div>
<div style="left:560px;top:374px;width:775px;height:560px;border:1px dashed #c2c2c2;background:#fff;"></div>
<div style="left:560px;top:374px;width:775px;height:149.5px;border:1px dashed #5e5e5e;border-bottom:none;"></div>
<div style="left:562px;top:375.7px;width:771.8px;height:147.8px;border:1.2px solid #858585;box-sizing:border-box;"></div>
<div style="left:680.3px;top:376.7px;width:652.8px;height:83.3px;background:#004282;"></div>
<div style="left:563px;top:459.8px;width:770px;height:1.2px;background:#666;"></div>
<div style="left:563px;top:491px;width:770px;height:1px;background:#999;"></div>
<div style="left:754.2px;top:461px;width:1px;height:62px;background:#999;"></div>
<div style="left:947.2px;top:461px;width:1px;height:62px;background:#999;"></div>
<div style="left:1139.2px;top:461px;width:1px;height:62px;background:#999;"></div>
<div style="left:578.6px;top:422.6px;width:1.3px;height:12.6px;background:#1d4e89;"></div>
<div style="left:560px;top:524.8px;width:776px;height:30.3px;background:#0087a7;"></div>
<div style="left:560px;top:524.4px;width:776px;height:0;border-top:1px dashed rgba(255,255,255,.55);"></div>
<div style="left:560px;top:554.5px;width:776px;height:0;border-top:1px dashed rgba(255,255,255,.55);"></div>
<div style="left:560px;top:703.0px;width:776px;height:30.3px;background:#0087a7;"></div>
<div style="left:560px;top:702.6px;width:776px;height:0;border-top:1px dashed rgba(255,255,255,.55);"></div>
<div style="left:560px;top:732.7px;width:776px;height:0;border-top:1px dashed rgba(255,255,255,.55);"></div>
<div style="left:563px;top:557.6px;width:769.8px;height:144px;border:1px solid #d8d8d8;box-sizing:border-box;"></div>
<div class="g" style="top:613.8px;height:29px;"></div>
<div class="g" style="top:671.8px;height:29.2px;"></div>
<div style="left:564px;top:584px;width:768px;height:1px;background:#dcdcdc;"></div>
<div style="left:819.0px;top:558px;width:1px;height:143px;background:#d6d6d6;"></div>
<div style="left:1075.6px;top:558px;width:1px;height:143px;background:#d6d6d6;"></div>
<div style="left:563px;top:736.2px;width:769.8px;height:200px;border:1px solid #d8d8d8;box-sizing:border-box;"></div>
<div class="g" style="top:764.0px;height:28.9px;"></div>
<div class="g" style="top:821.8px;height:28.9px;"></div>
<div class="g" style="top:879.6px;height:28.9px;"></div>
<div style="left:564px;top:762.6px;width:768px;height:1.6px;background:#d2d2d2;"></div>
<div style="left:818.6px;top:737px;width:1px;height:180px;background:#d6d6d6;"></div>
<div style="left:1075.6px;top:737px;width:1px;height:180px;background:#d6d6d6;"></div>
<!-- sheet logo -->
<svg style="left:602px;top:392.500px;" width="45" height="54" viewBox="0 0 45 54">
<g fill="none" stroke-linecap="round" stroke-linejoin="round">
<path d="M21.6 1.4 C17.5 9 7.4 22 3.6 31 C1 37.500 1.600 44 6 48.400 C8 50.400 10.500 51.700 13.400 52.400" stroke="#f96a0c" stroke-width="3.800"/>
<path d="M21.500 1 C25.500 7.500 35 19.500 39 28 C40.800 31.600 41.400 34.500 41.200 37.800" stroke="#f96a0c" stroke-width="2.700"/>
<path d="M5 42 C10 38.200 16 38.600 22 40.200 C29 42.200 37 41.700 44 38" stroke="#f96a0c" stroke-width="3.400"/>
<path d="M8 47.200 C14 43.800 20 44.800 26 45.800 C32 46.600 38 45.600 42 43" stroke="#76b31a" stroke-width="1.900"/>
<path d="M11 50.600 C16 47.600 21 48.200 26 49 C31 49.600 35.500 48.800 39 46.600" stroke="#76b31a" stroke-width="1.600"/>
</g>
<g fill="#f96a0c" stroke="#f96a0c" stroke-width="0.700" stroke-linejoin="round">
<path d="M18 40 L22 27 L24.600 27 L27 40 L24.400 40 L23.300 32 L20.800 40 Z"/>
<path d="M13.400 22.400 L15.800 20.600 L29.800 27.400 L29 30.400 L15.800 24.400 C15.600 25.400 14.800 26.200 13.400 26.600 Z"/>
<rect x="13.800" y="25" width="1" height="14.500"/>
<path d="M25.600 40 L25.600 34.400 L28.400 32.200 L32.200 34.400 L32.200 40 Z"/>
<path d="M10 39.600 L38 39.600 L38 42 L10 42 Z"/>
</g>

</svg>

</div>
<div id="texts">
<span class="t" style="left:278.70px;top:200px;font-size:14.5px;line-height:16px;color:#fff;transform:scaleX(0.9929);">Operations LogBook</span>
<span class="t" style="left:91.72px;top:194px;font-size:20.5px;line-height:23px;color:transparent;transform:scaleX(0.8795);background:linear-gradient(90deg,#9352f8,#7c3dfd 50%,#a673f8);-webkit-background-clip:text;background-clip:text;clip-path:inset(6.2px 0 0 0);">in</span>
<span class="t" style="left:106.90px;top:195px;font-size:19.8px;line-height:22px;color:#575757;transform:scaleX(0.8011);">Sis</span>
<span class="t" style="left:139.80px;top:194px;font-size:20.5px;line-height:23px;color:#fff;transform:scaleX(0.8951);">suite</span>
<span class="t" style="left:52.00px;top:239px;font-size:13.8px;line-height:15px;color:#fff;transform:scaleX(0.9290);">Asset Browser</span>
<span class="t" style="left:78.90px;top:272px;font-size:15px;line-height:17px;color:#000;transform:scaleX(1.0220);">ABC Oil Company</span>
<span class="t" style="left:78.20px;top:296px;font-size:14px;line-height:16px;color:#4a86c5;transform:scaleX(0.8635);">CDU1</span>
<span class="t" style="left:78.20px;top:319px;font-size:14px;line-height:16px;color:#4a86c5;transform:scaleX(0.8116);">SRU</span>
<span class="t" style="left:77.28px;top:344px;font-size:14px;line-height:16px;color:#4a86c5;transform:scaleX(0.9213);">NHT</span>
<span class="t" style="left:78.20px;top:369px;font-size:14px;line-height:16px;color:#4a86c5;transform:scaleX(0.8735);">VGOHDT1</span>
<span class="t" style="left:78.20px;top:394px;font-size:14px;line-height:16px;color:#4a86c5;transform:scaleX(0.9223);">VGOMHC</span>
<span class="t" style="left:77.31px;top:418px;font-size:14px;line-height:16px;color:#4a86c5;transform:scaleX(0.8948);">DHDT</span>
<span class="t" style="left:77.28px;top:443px;font-size:14px;line-height:16px;color:#4a86c5;transform:scaleX(0.9209);">DHDS</span>
<span class="t" style="left:77.30px;top:467px;font-size:14px;line-height:16px;color:#4a86c5;transform:scaleX(0.8966);">DCU</span>
<span class="t" style="left:77.25px;top:492px;font-size:14px;line-height:16px;color:#4a86c5;transform:scaleX(0.9464);">HMU1</span>
<span class="t" style="left:77.26px;top:517px;font-size:14px;line-height:16px;color:#4a86c5;transform:scaleX(0.9379);">ISOM</span>
<span class="t" style="left:77.37px;top:541px;font-size:14px;line-height:16px;color:#4a86c5;transform:scaleX(0.8313);">FCCU</span>
<span class="t" style="left:78.20px;top:566px;font-size:14px;line-height:16px;color:#4a86c5;transform:scaleX(0.8896);">CDU2</span>
<span class="t" style="left:77.23px;top:591px;font-size:14px;line-height:16px;color:#4a86c5;transform:scaleX(0.9722);">HMU2</span>
<span class="t" style="left:78.20px;top:615px;font-size:14px;line-height:16px;color:#4a86c5;transform:scaleX(0.8107);">CCR</span>
<span class="t" style="left:78.20px;top:640px;font-size:14px;line-height:16px;color:#4a86c5;transform:scaleX(0.8225);">CPP</span>
<span class="t" style="left:77.21px;top:664px;font-size:14px;line-height:16px;color:#4a86c5;transform:scaleX(0.9920);">MINI HMU</span>
<span class="t" style="left:77.35px;top:689px;font-size:14px;line-height:16px;color:#4a86c5;transform:scaleX(0.8478);">UTILITY</span>
<span class="t" style="left:78.20px;top:713px;font-size:14px;line-height:16px;color:#4a86c5;transform:scaleX(0.8708);">ARU SWS</span>
<span class="t" style="left:78.20px;top:738px;font-size:14px;line-height:16px;color:#4a86c5;transform:scaleX(0.8645);">ARU SWS1</span>
<span class="t" style="left:78.20px;top:763px;font-size:14px;line-height:16px;color:#4a86c5;transform:scaleX(0.8254);">SRU1</span>
<span class="t" style="left:78.20px;top:787px;font-size:14px;line-height:16px;color:#4a86c5;transform:scaleX(0.8750);">Tanks</span>
<span class="t" style="left:78.20px;top:812px;font-size:14px;line-height:16px;color:#4a86c5;transform:scaleX(0.8360);">SRU2</span>
<span class="t" style="left:77.25px;top:837px;font-size:14px;line-height:16px;color:#4a86c5;transform:scaleX(0.9510);">My Asset</span>
<span class="t" style="left:77.35px;top:862px;font-size:14px;line-height:16px;color:#4a86c5;transform:scaleX(0.8489);">II</span>
<span class="t" style="left:78.20px;top:887px;font-size:14px;line-height:16px;color:#4a86c5;transform:scaleX(0.9134);">Asset10</span>
<span class="t" style="left:673.80px;top:251px;font-size:13px;line-height:15px;color:#333;transform:scaleX(0.9658);">Summary</span>
<span class="t" style="left:796.71px;top:251px;font-size:13px;line-height:15px;color:#fff;transform:scaleX(0.9870);">Log Sheet</span>
<span class="t" style="left:936.27px;top:251px;font-size:13px;line-height:15px;color:#333;transform:scaleX(1.0251);">Notes</span>
<span class="t" style="left:1046.28px;top:251px;font-size:13px;line-height:15px;color:#333;transform:scaleX(1.0171);">Instructions</span>
<span class="t" style="left:1169.90px;top:251px;font-size:13px;line-height:15px;color:#333;transform:scaleX(1.0050);">Shift Handover</span>
<span class="t" style="left:402.97px;top:301px;font-size:13.2px;line-height:15px;color:#fff;transform:scaleX(1.0299);">Logbook</span>
<span class="t" style="left:459.50px;top:301px;font-size:13.2px;line-height:15px;color:#7fa3c9;transform:scaleX(1.1250);">-</span>
<span class="t" style="left:467.23px;top:301px;font-size:13.2px;line-height:15px;color:#fff;transform:scaleX(0.9722);">PanelOfficerFinal</span>
<span class="t" style="left:854.60px;top:334px;font-size:13px;line-height:15px;color:#4a86c5;transform:scaleX(0.9295);">Status :</span>
<span class="t" style="left:900.00px;top:334px;font-size:13px;line-height:15px;color:#333;transform:scaleX(0.9792);">Closed</span>
<span class="t" style="left:951.00px;top:334px;font-size:13px;line-height:15px;color:#4a86c5;">Approval Status :</span>
<span class="t" style="left:1053.00px;top:334px;font-size:13px;line-height:15px;color:#333;transform:scaleX(1.0285);">Approved</span>
<span class="t" style="left:934.65px;top:396px;font-size:12px;line-height:14px;color:#fff;font-weight:700;transform:scaleX(0.8951);">PANEL OFFICER LOGBOOK</span>
<span class="t" style="left:974.90px;top:427px;font-size:12px;line-height:14px;color:#fff;font-weight:700;transform:scaleX(0.9311);">ARU SWS-1</span>
<span class="t" style="left:644.90px;top:469px;font-size:12px;line-height:14px;color:#1a1a1a;font-weight:700;transform:scaleX(1.0126);">Shift</span>
<span class="t" style="left:783.60px;top:469px;font-size:12px;line-height:14px;color:#1a1a1a;font-weight:700;transform:scaleX(0.9541);">SHIFT C (22:00 To 06:00)</span>
<span class="t" style="left:1030.40px;top:469px;font-size:12px;line-height:14px;color:#1a1a1a;font-weight:700;transform:scaleX(0.9569);">Date</span>
<span class="t" style="left:1199.60px;top:468px;font-size:13px;line-height:15px;color:#1a1a1a;font-weight:700;">21 Jan 2020</span>
<span class="t" style="left:619.85px;top:501px;font-size:12px;line-height:14px;color:#1a1a1a;font-weight:700;transform:scaleX(0.9417);">Panel Officer1</span>
<span class="t" style="left:802.00px;top:501px;font-size:12px;line-height:14px;color:#1a1a1a;font-weight:700;transform:scaleX(0.9475);">ARUSWSManager</span>
<span class="t" style="left:1004.40px;top:501px;font-size:12px;line-height:14px;color:#1a1a1a;font-weight:700;transform:scaleX(0.9454);">Panel Officer2</span>
<span class="t" style="left:1187.60px;top:501px;font-size:12px;line-height:14px;color:#1a1a1a;font-weight:700;transform:scaleX(0.9357);">SRUPanelOfficer3</span>
<span class="t" style="left:900.70px;top:533px;font-size:13px;line-height:15px;color:#fff;transform:scaleX(1.0166);">Amine Inventory</span>
<span class="t" style="left:884.50px;top:711px;font-size:13px;line-height:15px;color:#fff;">Pump Running Status</span>
<span class="t" style="left:571.60px;top:566px;font-size:12px;line-height:14px;color:#1c1c1c;transform:scaleX(0.9228);">Parameter</span>
<span class="t" style="left:827.20px;top:566px;font-size:12px;line-height:14px;color:#1c1c1c;transform:scaleX(0.9536);">UOM</span>
<span class="t" style="left:1083.90px;top:566px;font-size:12px;line-height:14px;color:#1c1c1c;transform:scaleX(0.9347);">21-Jan-20 22:00</span>
<span class="t" style="left:571.60px;top:593px;font-size:12.4px;line-height:14px;color:#1c1c1c;transform:scaleX(0.8243);">VGO</span>
<span class="t" style="left:826.22px;top:593px;font-size:12.4px;line-height:14px;color:#1c1c1c;transform:scaleX(0.9803);">M3</span>
<span class="t" style="left:1083.90px;top:592px;font-size:13px;line-height:15px;color:#1c1c1c;transform:scaleX(0.9461);">173.00</span>
<span class="t" style="left:570.73px;top:622px;font-size:12.4px;line-height:14px;color:#1c1c1c;transform:scaleX(0.8716);">DHDT</span>
<span class="t" style="left:826.22px;top:622px;font-size:12.4px;line-height:14px;color:#1c1c1c;transform:scaleX(0.9803);">M3</span>
<span class="t" style="left:1083.90px;top:621px;font-size:13px;line-height:15px;color:#1c1c1c;transform:scaleX(0.9411);">21.00</span>
<span class="t" style="left:570.77px;top:651px;font-size:12.4px;line-height:14px;color:#1c1c1c;transform:scaleX(0.8317);">FCCU</span>
<span class="t" style="left:826.22px;top:651px;font-size:12.4px;line-height:14px;color:#1c1c1c;transform:scaleX(0.9803);">M3</span>
<span class="t" style="left:1083.90px;top:650px;font-size:13px;line-height:15px;color:#1c1c1c;transform:scaleX(0.9461);">191.00</span>
<span class="t" style="left:571.60px;top:680px;font-size:12.4px;line-height:14px;color:#1c1c1c;transform:scaleX(0.8595);">ARU1</span>
<span class="t" style="left:826.22px;top:680px;font-size:12.4px;line-height:14px;color:#1c1c1c;transform:scaleX(0.9803);">M3</span>
<span class="t" style="left:1083.90px;top:679px;font-size:13px;line-height:15px;color:#1c1c1c;transform:scaleX(0.9461);">802.00</span>
<span class="t" style="left:571.00px;top:744px;font-size:12px;line-height:14px;color:#1c1c1c;transform:scaleX(0.9239);">Parameters</span>
<span class="t" style="left:826.50px;top:744px;font-size:12px;line-height:14px;color:#1c1c1c;transform:scaleX(0.9806);">Description</span>
<span class="t" style="left:1083.90px;top:744px;font-size:12px;line-height:14px;color:#1c1c1c;transform:scaleX(0.9347);">21-Jan-20 22:00</span>
<span class="t" style="left:571.00px;top:771px;font-size:12px;line-height:14px;color:#1c1c1c;transform:scaleX(0.8854);">150P_101A_S.PV | Value</span>
<span class="t" style="left:826.50px;top:771px;font-size:12px;line-height:14px;color:#1c1c1c;transform:scaleX(0.9309);">LP Condensate Pump</span>
<span class="t" style="left:1084.00px;top:773px;font-size:9.5px;line-height:11px;color:#1c1c1c;transform:scaleX(0.8333);">S</span>
<span class="t" style="left:571.00px;top:800px;font-size:12px;line-height:14px;color:#1c1c1c;transform:scaleX(0.8854);">150P_301A_S.PV | Value</span>
<span class="t" style="left:826.50px;top:800px;font-size:12px;line-height:14px;color:#1c1c1c;transform:scaleX(0.9449);">Sulfur Pump</span>
<span class="t" style="left:1084.00px;top:802px;font-size:9.5px;line-height:11px;color:#1c1c1c;transform:scaleX(0.9000);">A</span>
<span class="t" style="left:571.00px;top:829px;font-size:12px;line-height:14px;color:#1c1c1c;transform:scaleX(0.8854);">150P_501A_S.PV | Value</span>
<span class="t" style="left:826.50px;top:829px;font-size:12px;line-height:14px;color:#1c1c1c;transform:scaleX(0.9533);">Quench Water Pump</span>
<span class="t" style="left:1084.00px;top:831px;font-size:9.5px;line-height:11px;color:#1c1c1c;transform:scaleX(0.8333);">S</span>
<span class="t" style="left:571.00px;top:858px;font-size:12px;line-height:14px;color:#1c1c1c;transform:scaleX(0.8854);">150P_502A_S.PV | Value</span>
<span class="t" style="left:826.50px;top:858px;font-size:12px;line-height:14px;color:#1c1c1c;transform:scaleX(0.9377);">Rich Solvent Pump</span>
<span class="t" style="left:1084.00px;top:860px;font-size:9.5px;line-height:11px;color:#1c1c1c;transform:scaleX(0.9000);">A</span>
<span class="t" style="left:571.00px;top:887px;font-size:12px;line-height:14px;color:#1c1c1c;transform:scaleX(0.8815);">150J_301A_S.PV | Value</span>
<span class="t" style="left:826.50px;top:887px;font-size:12px;line-height:14px;color:#1c1c1c;transform:scaleX(0.9314);">Steam Ejector</span>
<span class="t" style="left:1084.00px;top:889px;font-size:9.5px;line-height:11px;color:#1c1c1c;transform:scaleX(0.9000);">A</span>
</div>

</body></html>
